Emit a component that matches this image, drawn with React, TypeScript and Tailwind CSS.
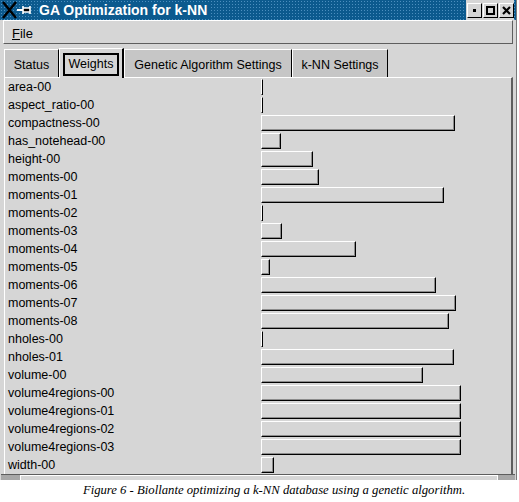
import React from "react";

const rows: { name: string; w: number }[] = [
  { name: "area-00", w: 2 },
  { name: "aspect_ratio-00", w: 2 },
  { name: "compactness-00", w: 194 },
  { name: "has_notehead-00", w: 20 },
  { name: "height-00", w: 52 },
  { name: "moments-00", w: 58 },
  { name: "moments-01", w: 183 },
  { name: "moments-02", w: 2 },
  { name: "moments-03", w: 21 },
  { name: "moments-04", w: 95 },
  { name: "moments-05", w: 9 },
  { name: "moments-06", w: 175 },
  { name: "moments-07", w: 195 },
  { name: "moments-08", w: 188 },
  { name: "nholes-00", w: 2 },
  { name: "nholes-01", w: 193 },
  { name: "volume-00", w: 162 },
  { name: "volume4regions-00", w: 200 },
  { name: "volume4regions-01", w: 200 },
  { name: "volume4regions-02", w: 200 },
  { name: "volume4regions-03", w: 200 },
  { name: "width-00", w: 13 },
];

function TitleIcon() {
  return (
    <svg width="34" height="18" viewBox="0 0 34 18" className="shrink-0">
      <path d="M1 1 L14 17 M14 1 L1 17" stroke="#000" strokeWidth="2.4" />
      <path d="M15 9 H21" stroke="#fff" strokeWidth="2" />
      <path d="M21 5 V13 M21 7 H28 V11 H21 M28 5 V13" stroke="#fff" strokeWidth="1.6" fill="#000" />
    </svg>
  );
}

function WinButton({ kind }: { kind: "min" | "max" | "close" }) {
  return (
    <div className="w-[15px] h-[15px] bg-[#d6d6d6] border border-t-white border-l-white border-r-black border-b-black flex items-center justify-center">
      {kind === "min" && <div className="w-[3px] h-[3px] bg-black" />}
      {kind === "max" && <div className="w-[9px] h-[9px] border-2 border-black" />}
      {kind === "close" && (
        <svg width="9" height="9" viewBox="0 0 9 9">
          <path d="M1 1 L8 8 M8 1 L1 8" stroke="#000" strokeWidth="2.2" />
        </svg>
      )}
    </div>
  );
}

function Tab({ label, selected, width }: { label: string; selected?: boolean; width: string }) {
  if (selected) {
    return (
      <div className={`${width} h-[30px] bg-[#d6d6d6] border-l border-t border-white border-r-2 border-r-black flex items-center justify-center px-[3px] pt-[2px] z-10 mb-[-1px]`}>
        <div className="w-full h-[23px] border-2 border-black flex items-center justify-center">
          {label}
        </div>
      </div>
    );
  }
  return (
    <div className={`${width} h-[28px] bg-[#c6c6c6] border-l border-t border-white border-r border-r-black flex items-center justify-center pt-[3px]`}>
      {label}
    </div>
  );
}

export default function App() {
  return (
    <div className="w-[519px] h-[502px] bg-white flex flex-col" style={{ fontFamily: '"Liberation Sans", Arial, sans-serif' }}>
      <div className="w-[517px] h-[480px] bg-[#d6d6d6] flex flex-col border-r border-r-[#7a7a7a]">
        {/* title bar */}
        <div className="h-[20px] bg-[#0c5a8e] bg-[radial-gradient(#4c8fbf_0.8px,transparent_0.9px)] [background-size:3px_3px] flex items-center pl-[2px] pr-[2px]">
          <TitleIcon />
          <span className="ml-[3px] text-white font-bold text-[14px] leading-none bg-[#0c5a8e] pr-[4px]">
            GA Optimization for k-NN
          </span>
          <div className="flex-1" />
          <div className="flex gap-[1px] bg-[#d6d6d6] h-[20px] items-center pl-[1px]">
            <WinButton kind="min" />
            <WinButton kind="max" />
            <WinButton kind="close" />
          </div>
        </div>

        {/* menu bar */}
        <div className="h-[24px] mx-[3px] border border-t-white border-l-white border-r-[#5e5e5e] border-b-[#5e5e5e] flex items-center pl-[8px] pt-[3px] text-[13px] text-black">
          <span>
            <span className="underline">F</span>ile
          </span>
        </div>

        {/* tabs */}
        <div className="mt-[4px] ml-[4px] flex items-end text-[12.5px] text-black h-[30px]">
          <Tab label="Status" width="w-[55px]" />
          <Tab label="Weights" width="w-[65px]" selected />
          <Tab label="Genetic Algorithm Settings" width="w-[168px]" />
          <Tab label="k-NN Settings" width="w-[96px]" />
        </div>

        {/* panel */}
        <div className="ml-[4px] mr-[3px] flex-1 border-t border-l border-t-white border-l-white border-r-2 border-r-[#5e5e5e] flex flex-col text-[12.5px] text-black">
          {rows.map((r) => (
            <div key={r.name} className="h-[18px] flex items-center">
              <div className="w-[256px] pl-[3px] leading-none">{r.name}</div>
              <div
                className="h-[16px] bg-[#d6d6d6] border border-t-white border-l-white border-r-black border-b-black shadow-[inset_-1px_-1px_0_#8c8c8c]"
                style={{ width: r.w }}
              />
            </div>
          ))}
        </div>

        {/* bottom strip */}
        <div className="h-[6px] mx-[1px] border-t border-t-[#5e5e5e] flex">
          <div className="w-[20px] bg-[#a8a8a8] border-r border-r-white" />
          <div className="flex-1 border-t border-t-white" />
          <div className="w-[18px] bg-[#a8a8a8] border-l border-l-white" />
        </div>
      </div>

      <div
        className="flex-1 flex items-center justify-center italic text-[12.7px] text-black pl-[29px]"
        style={{ fontFamily: '"Liberation Serif", "Times New Roman", serif' }}
      >
        Figure 6 - Biollante optimizing a k-NN database using a genetic algorithm.
      </div>
    </div>
  );
}
